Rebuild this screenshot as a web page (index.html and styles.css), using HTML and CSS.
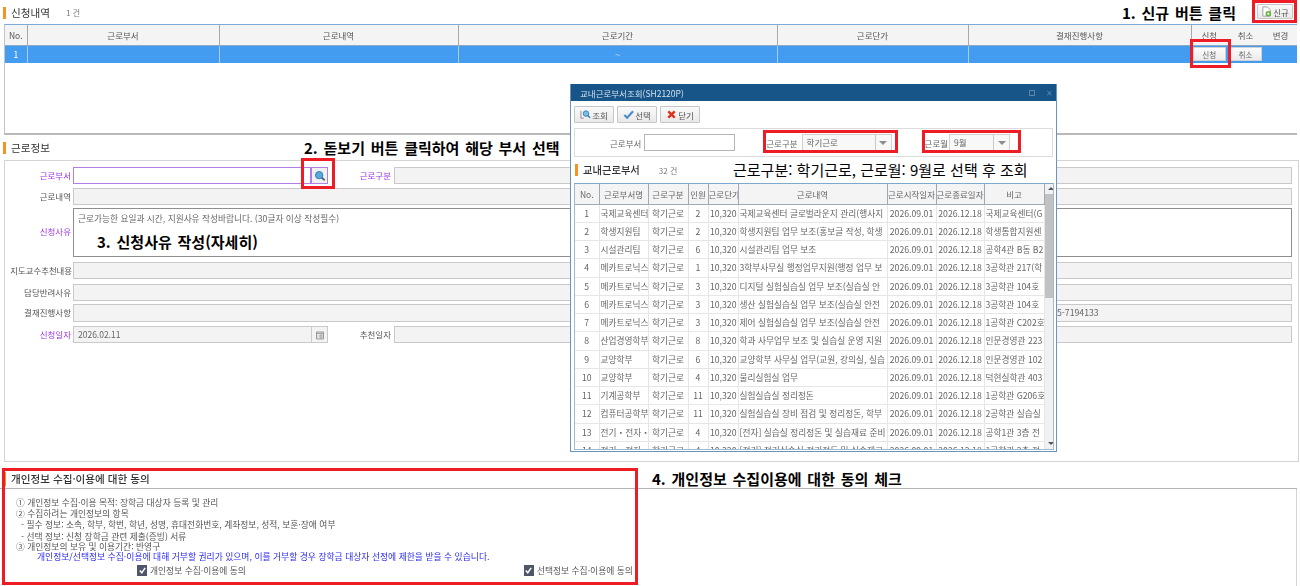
FILE: index.html
```html
<!DOCTYPE html>
<html lang="ko">
<head>
<meta charset="utf-8">
<title>신청내역</title>
<link rel="stylesheet" href="styles.css">
</head>
<body>
<main class="page">
  <section class="sec-apply">
    <header class="sec-head">
      <h2 class="sec-title">신청내역</h2><span class="count">1 건</span>
      <button class="btn btn-new" type="button">
        <svg class="ico" viewBox="0 0 12 12"><path d="M2 1h5l3 3v7H2z" fill="#fff" stroke="#999"/><circle cx="8" cy="8.5" r="3" fill="#5fae3a"/><path d="M6.5 8.5h3M8 7v3" stroke="#fff"/></svg>신규
      </button>
    </header>
    <div class="grid-top">
      <table class="tbl-top">
        <colgroup><col class="t1"><col class="t2"><col class="t3"><col class="t4"><col class="t5"><col class="t6"><col class="t7"><col class="t8"><col class="t9"></colgroup>
        <thead><tr><th>No.</th><th>근로부서</th><th>근로내역</th><th>근로기간</th><th>근로단가</th><th>결재진행사항</th><th class="plain">신청</th><th class="plain">취소</th><th class="plain">변경</th></tr></thead>
        <tbody><tr><td>1</td><td></td><td></td><td>~</td><td></td><td></td><td class="act"><button class="btn-mini" type="button">신청</button></td><td class="act"><button class="btn-mini" type="button">취소</button></td><td></td></tr></tbody>
      </table>
    </div>
  </section>

  <section class="sec-work">
    <header class="sec-head head-work"><h2 class="sec-title">근로정보</h2></header>
    <div class="form">
      <div class="row"><label class="lbl req">근로부서</label><div class="fld fld-req fld-dept"></div><button class="btn-search" type="button"><svg viewBox="0 0 14 14"><path d="M8.5 8.5l4 3.5" stroke="#5b6670" stroke-width="2.2"/><circle cx="6" cy="6" r="4.3" fill="#58a9dc" stroke="#2a78ad"/></svg></button><label class="lbl lbl2 req">근로구분</label><div class="fld fill"></div></div>
      <div class="row"><label class="lbl">근로내역</label><div class="fld fill"></div></div>
      <div class="row"><label class="lbl req lbl-mid">신청사유</label><div class="area fill">근로가능한 요일과 시간, 지원사유 작성바랍니다. (30글자 이상 작성필수)</div></div>
      <div class="row"><label class="lbl lbl-clip">지도교수추천내용</label><div class="fld fill"></div></div>
      <div class="row"><label class="lbl">담당반려사유</label><div class="fld fill"></div></div>
      <div class="row row-tall"><label class="lbl">결재진행사항</label><div class="fld fill fld-phone">5-7194133</div></div>
      <div class="row"><label class="lbl req">신청일자</label><div class="fld fld-date">2026.02.11<span class="cal"><svg viewBox="0 0 10 10"><path d="M1.5 2h7v7h-7z" fill="#e3e3e3" stroke="#999"/><path d="M1.5 3.5h7M5 5h2v2.5H5z" fill="none" stroke="#999" stroke-width=".8"/></svg></span></div><label class="lbl lbl2">추천일자</label><div class="fld fill"></div></div>
    </div>
  </section>

  <section class="sec-agree">
    <header class="sec-head head-agree"><h2 class="sec-title strong">개인정보 수집·이용에 대한 동의</h2></header>
    <div class="agree">
      <p>① 개인정보 수집·이용 목적: 장학금 대상자 등록 및 관리</p>
      <p>② 수집하려는 개인정보의 항목</p>
      <p class="sub sub-first">- 필수 정보: 소속, 학부, 학번, 학년, 성명, 휴대전화번호, 계좌정보, 성적, 보훈·장애 여부</p>
      <p class="sub tight">- 선택 정보: 신청 장학금 관련 제출(증빙) 서류</p>
      <p class="tight">③ 개인정보의 보유 및 이용기간: 반영구</p>
      <p class="tight notice">개인정보/선택정보 수집·이용에 대해 거부할 권리가 있으며, 이를 거부할 경우 장학금 대상자 선정에 제한을 받을 수 있습니다.</p>
      <div class="checks">
        <label class="chk"><span class="box"><svg viewBox="0 0 10 10"><path d="M2 5l2.2 2.5L8 2" fill="none" stroke="#fff" stroke-width="1.6"/></svg></span>개인정보 수집·이용에 동의</label>
        <label class="chk"><span class="box"><svg viewBox="0 0 10 10"><path d="M2 5l2.2 2.5L8 2" fill="none" stroke="#fff" stroke-width="1.6"/></svg></span>선택정보 수집·이용에 동의</label>
      </div>
    </div>
  </section>

  <div class="dialog">
    <div class="dlg-bar"><span>교내근로부서조회(SH2120P)</span><span class="dlg-ctl"><i class="dlg-max"></i><span class="dlg-x">✕</span></span></div>
    <div class="dlg-tools">
      <button class="btn dlg-btn" type="button"><svg class="ico" viewBox="0 0 12 12"><path d="M1 2v8h3" fill="none" stroke="#888"/><circle cx="6.5" cy="5" r="3" fill="#7fbce6" stroke="#2f7fb8"/><path d="M8.5 7l2.5 2.5" stroke="#2f7fb8" stroke-width="1.6"/></svg>조회</button>
      <button class="btn dlg-btn" type="button"><svg class="ico" viewBox="0 0 12 12"><path d="M1.5 6.5l3 3L11 2.5" fill="none" stroke="#4b8ec9" stroke-width="2.4"/></svg>선택</button>
      <button class="btn dlg-btn" type="button"><svg class="ico" viewBox="0 0 12 12"><path d="M2.5 2.5l7 7M9.5 2.5l-7 7" stroke="#e0301e" stroke-width="2.6"/></svg>닫기</button>
    </div>
    <div class="dlg-search">
      <label class="s-lbl s-dept">근로부서</label><div class="s-input"></div>
      <label class="s-lbl s-type">근로구분</label><div class="s-select s-sel-type"><span class="s-val">학기근로</span><span class="s-arrow"><i></i></span></div>
      <label class="s-lbl s-month">근로월</label><div class="s-select s-sel-month"><span class="s-val">9월</span><span class="s-arrow"><i></i></span></div>
    </div>
    <div class="dlg-head"><h2 class="sec-title dlg-title">교내근로부서</h2><span class="count dlg-count">32 건</span></div>
    <div class="dlg-grid">
      <table class="tbl-dlg">
        <colgroup><col class="d1"><col class="d2"><col class="d3"><col class="d4"><col class="d5"><col class="d6"><col class="d7"><col class="d8"><col class="d9"></colgroup>
        <thead><tr><th>No.</th><th>근로부서명</th><th>근로구분</th><th>인원</th><th>근로단가</th><th>근로내역</th><th>근로시작일자</th><th>근로종료일자</th><th>비고</th></tr></thead>
        <tbody>
          <tr><td class="c">1</td><td>국제교육센터</td><td class="c">학기근로</td><td class="c">2</td><td class="r">10,320</td><td>국제교육센터 글로벌라운지 관리(행사지</td><td class="c">2026.09.01</td><td class="c">2026.12.18</td><td>국제교육센터(G</td></tr>
          <tr><td class="c">2</td><td>학생지원팀</td><td class="c">학기근로</td><td class="c">2</td><td class="r">10,320</td><td>학생지원팀 업무 보조(홍보글 작성, 학생</td><td class="c">2026.09.01</td><td class="c">2026.12.18</td><td>학생통합지원센</td></tr>
          <tr><td class="c">3</td><td>시설관리팀</td><td class="c">학기근로</td><td class="c">6</td><td class="r">10,320</td><td>시설관리팀 업무 보조</td><td class="c">2026.09.01</td><td class="c">2026.12.18</td><td>공학4관 B동 B2</td></tr>
          <tr><td class="c">4</td><td>메카트로닉스</td><td class="c">학기근로</td><td class="c">1</td><td class="r">10,320</td><td>3학부사무실 행정업무지원(행정 업무 보</td><td class="c">2026.09.01</td><td class="c">2026.12.18</td><td>3공학관 217(학</td></tr>
          <tr><td class="c">5</td><td>메카트로닉스</td><td class="c">학기근로</td><td class="c">3</td><td class="r">10,320</td><td>디지털 실험실습실 업무 보조(실습실 안</td><td class="c">2026.09.01</td><td class="c">2026.12.18</td><td>3공학관 104호</td></tr>
          <tr><td class="c">6</td><td>메카트로닉스</td><td class="c">학기근로</td><td class="c">3</td><td class="r">10,320</td><td>생산 실험실습실 업무 보조(실습실 안전</td><td class="c">2026.09.01</td><td class="c">2026.12.18</td><td>3공학관 104호</td></tr>
          <tr><td class="c">7</td><td>메카트로닉스</td><td class="c">학기근로</td><td class="c">3</td><td class="r">10,320</td><td>제어 실험실습실 업무 보조(실습실 안전</td><td class="c">2026.09.01</td><td class="c">2026.12.18</td><td>1공학관 C202호</td></tr>
          <tr><td class="c">8</td><td>산업경영학부</td><td class="c">학기근로</td><td class="c">8</td><td class="r">10,320</td><td>학과 사무업무 보조 및 실습실 운영 지원</td><td class="c">2026.09.01</td><td class="c">2026.12.18</td><td>인문경영관 223</td></tr>
          <tr><td class="c">9</td><td>교양학부</td><td class="c">학기근로</td><td class="c">6</td><td class="r">10,320</td><td>교양학부 사무실 업무(교원, 강의실, 실습</td><td class="c">2026.09.01</td><td class="c">2026.12.18</td><td>인문경영관 102</td></tr>
          <tr><td class="c">10</td><td>교양학부</td><td class="c">학기근로</td><td class="c">4</td><td class="r">10,320</td><td>물리실험실 업무</td><td class="c">2026.09.01</td><td class="c">2026.12.18</td><td>덕현실학관 403</td></tr>
          <tr><td class="c">11</td><td>기계공학부</td><td class="c">학기근로</td><td class="c">11</td><td class="r">10,320</td><td>실험실습실 정리정돈</td><td class="c">2026.09.01</td><td class="c">2026.12.18</td><td>1공학관 G206호</td></tr>
          <tr><td class="c">12</td><td>컴퓨터공학부</td><td class="c">학기근로</td><td class="c">11</td><td class="r">10,320</td><td>실험실습실 장비 점검 및 정리정돈, 학부</td><td class="c">2026.09.01</td><td class="c">2026.12.18</td><td>2공학관 실습실</td></tr>
          <tr><td class="c">13</td><td>전기・전자・</td><td class="c">학기근로</td><td class="c">4</td><td class="r">10,320</td><td>[전자] 실습실 정리정돈 및 실습재료 준비</td><td class="c">2026.09.01</td><td class="c">2026.12.18</td><td>공학1관 3층 전</td></tr>
          <tr><td class="c">14</td><td>전기・전자・</td><td class="c">학기근로</td><td class="c">4</td><td class="r">10,320</td><td>[전기] 전기실습실 정리정돈 및 실습재료</td><td class="c">2026.09.01</td><td class="c">2026.12.18</td><td>1공학관 2층 전</td></tr>
        </tbody>
      </table>
      <div class="scroll"><span class="sc-up"></span><span class="sc-thumb"></span><span class="sc-down"></span></div>
    </div>
  </div>

  <p class="note note1">1. 신규 버튼 클릭</p>
  <p class="note note2">2. 돋보기 버튼 클릭하여 해당 부서 선택</p>
  <p class="note note3">3. 신청사유 작성(자세히)</p>
  <p class="note note4">4. 개인정보 수집이용에 대한 동의 체크</p>
  <p class="note note5">근로구분: 학기근로, 근로월: 9월로 선택 후 조회</p>

  <div class="mark m-new"></div>
  <div class="mark m-apply"></div>
  <div class="mark m-search"></div>
  <div class="mark m-type"></div>
  <div class="mark m-month"></div>
  <div class="mark m-agree"></div>
</main>
</body>
</html>
```

FILE: styles.css
```css
* { box-sizing: border-box; }
html, body { margin: 0; padding: 0; background: #fff; }
body { font-family: "Noto Sans CJK KR", "Noto Sans", sans-serif; font-size: 8.5px; color: #555; overflow: hidden; }
p, h2 { margin: 0; }
button { font-family: inherit; font-size: inherit; color: inherit; padding: 0; }
.page { position: relative; width: 1300px; height: 586px; overflow: hidden; }
.sec-apply, .sec-work, .sec-agree { filter: blur(.3px); }

/* section headings */
.sec-head { display: flex; align-items: center; height: 24px; padding: 1px 7px 0 3px; }
.sec-title { font-size: 10.6px; font-weight: 400; color: #333; line-height: 12px; border-left: 3px solid #f7931e; padding-left: 5px; }
.sec-title.strong { font-weight: 500; }
.count { margin-left: 16px; font-size: 8px; color: #777; }
.btn { display: flex; align-items: center; justify-content: center; gap: 1px; background: linear-gradient(#fafafa, #e9e9e9); border: 1px solid #c6c6c6; border-radius: 1px; color: #555; }
.btn-new { margin-left: auto; width: 36px; height: 15px; margin-top: -2px; }
.ico { width: 11px; height: 11px; flex: none; }

/* top grid */
.sec-apply { height: 135px; }
.grid-top { height: 111px; margin-left: 4px; width: 1293px; border-top: 1px solid #7cabd8; border-bottom: 2px solid #b9b9b9; border-left: 1px solid #c4c4c4; }
.tbl-top { table-layout: fixed; border-collapse: collapse; width: 1292px; }
.t1 { width: 22px; } .t2 { width: 192px; } .t3 { width: 239px; } .t4 { width: 319px; } .t5 { width: 191px; } .t6 { width: 223px; } .t7 { width: 36px; } .t8 { width: 37px; } .t9 { width: 33px; }
.tbl-top th { height: 20px; font-weight: 400; background: #f4f4f4; border-right: 1px solid #a9a9a9; border-bottom: 1px solid #8ea9c4; color: #555; }
.tbl-top th.plain { border-right: 0; }
.tbl-top td { height: 18px; background: #449cf0; color: #fff; text-align: center; border-right: 1px solid #a7cdf3; padding: 0; }
.tbl-top td.act, .tbl-top td:last-child { border-right: 0; }
.btn-mini { display: block; margin: 0 auto; width: 33px; height: 14px; background: linear-gradient(#fbfbfb, #ececec); border: 1px solid #d2d2d2; line-height: 11px; font-size: 7.6px; color: #666; }

/* form */
.sec-work { height: 327px; }
.head-work { height: 25px; }
.form { margin-left: 4px; width: 1295px; height: 302px; border: 1px solid #d4d4d4; padding: 6px 6px 0 0; display: grid; grid-template-rows: 21px 20px 54px 22px 20px 22px 17px; }
.row { display: flex; align-items: flex-start; height: 17px; }
.row:nth-child(3) { height: 49px; }
.row-tall { height: 18px; }
.lbl { width: 67px; flex: none; height: 100%; text-align: right; line-height: 16px; color: #555; white-space: nowrap; padding-right: 1px; }
.lbl2 { width: 64px; margin-right: 1px; }
.req { color: #9a35e8; }
.lbl-mid { line-height: 46px; }
.lbl-clip { direction: rtl; overflow: hidden; padding-right: 0; font-size: 8.4px; text-overflow: clip; }
.fld { height: 100%; margin-left: 1px; background: #f3f3f3; border: 1px solid #c9c9c9; line-height: 15px; padding-left: 4px; color: #666; }
.fill { flex: 1; }
.fld-req { background: #fff; border-color: #b27ee6; }
.fld-dept { width: 238px; flex: none; }
.btn-search { width: 17px; height: 17px; flex: none; background: #f1f1f1; border: 1px solid #b27ee6; display: flex; align-items: center; justify-content: center; }
.btn-search svg { width: 12px; height: 12px; }
.area { height: 100%; margin-left: 1px; background: #fff; border: 1px solid #8e8e8e; padding: 3px 4px; line-height: 13px; color: #666; font-size: 8.7px; }
.fld-date { width: 255px; flex: none; display: flex; justify-content: space-between; padding-right: 0; }
.cal { width: 16px; border-left: 1px solid #ccc; display: flex; align-items: center; justify-content: center; }
.cal svg { width: 10px; height: 10px; }
.fld-phone { padding-left: 983px; font-size: 8.7px; white-space: nowrap; overflow: hidden; }

/* consent */
.sec-agree { height: 124px; }
.head-agree { height: 27px; padding-top: 7px; border-bottom: 1px solid #b5b5b5; margin-left: 0; width: 1297px; }
.head-agree .sec-title { line-height: 14px; }
.agree { margin-left: 4px; width: 1293px; height: 97px; border-left: 1px solid #d4d4d4; border-right: 1px solid #d4d4d4; padding: 8px 0 0 11px; line-height: 11px; color: #555; font-size: 8.75px; }
.agree p { height: 11px; white-space: nowrap; }
.sub { padding-left: 5px; }
.agree .sub-first { height: 13px; }
.agree .tight { height: 10px; line-height: 10px; }
.agree .notice { padding-left: 21px; color: #2a2af0; font-size: 8.8px; }
.checks { display: flex; margin-top: 3px; padding-left: 121px; }
.chk { display: flex; align-items: center; gap: 3px; white-space: nowrap; }
.chk:last-child { margin-left: 278px; }
.box { width: 10px; height: 11px; background: #4f5668; display: flex; align-items: center; justify-content: center; flex: none; }
.box svg { width: 9px; height: 9px; }

/* dialog window */
.dialog { position: absolute; left: 570px; top: 84px; width: 487px; height: 368px; background: #fff; border: 1px solid #6d94b8; border-top: 0; overflow: hidden; filter: blur(.4px); }
.dlg-bar { height: 17px; background: #175488; color: #d4e2ee; display: flex; align-items: center; justify-content: space-between; padding: 0 3px 0 9px; font-size: 8.5px; }
.dlg-ctl { display: flex; align-items: center; gap: 11px; color: #5c86aa; }
.dlg-max { width: 6px; height: 6px; border: 1px solid #5c86aa; }
.dlg-x { font-size: 8px; }
.dlg-tools { display: flex; gap: 3px; padding: 5px 0 0 3px; height: 27px; }
.dlg-btn { width: 40px; height: 17px; }
.dlg-search { position: relative; margin: 0 3px; height: 29px; border: 1px solid #dcdcdc; display: flex; align-items: center; color: #666; }
.s-lbl { white-space: nowrap; }
.s-dept { margin-left: 35px; }
.s-input { width: 91px; height: 17px; border: 1px solid #b5b5b5; margin-left: 3px; }
.s-type { margin-left: 31px; }
.s-select { height: 17px; border: 1px solid #d2d2d2; display: flex; align-items: stretch; margin-left: 4px; background: #f8f8f8; }
.s-sel-type { width: 90px; }
.s-sel-month { width: 61px; margin-left: 1px; }
.s-val { flex: 1; padding-left: 4px; line-height: 15px; }
.s-arrow { width: 16px; border-left: 1px solid #c9c9c9; display: flex; align-items: center; justify-content: center; }
.s-arrow i { width: 0; height: 0; border: 4px solid transparent; border-top: 4px solid #8c8c8c; border-bottom: 0; }
.s-month { margin-left: 33px; }
.dlg-head { display: flex; align-items: center; height: 26px; padding: 0 0 0 4px; }
.dlg-title { font-weight: 500; font-size: 10.3px; }
.dlg-count { margin-left: 19px; }
.dlg-grid { display: flex; margin-left: 3px; width: 480px; height: 267px; border: 1px solid #9db9d3; border-top: 1px solid #7ea9cf; overflow: hidden; }
.tbl-dlg { table-layout: fixed; border-collapse: collapse; width: 469px; height: 0; flex: none; }
.d1 { width: 24px; } .d2 { width: 49px; } .d3 { width: 40px; } .d4 { width: 20px; } .d5 { width: 30px; } .d6 { width: 149px; } .d7 { width: 49px; } .d8 { width: 48px; } .d9 { width: 60px; }
.tbl-dlg th { height: 20px; padding: 0; font-weight: 400; background: #f4f4f4; border-right: 1px solid #9fa9b3; border-bottom: 1px solid #9fa9b3; color: #666; overflow: hidden; white-space: nowrap; }
.tbl-dlg td { height: 18.25px; padding: 0 1px 0 1px; border-right: 1px solid #e6e6e6; border-bottom: 1px solid #e6e6e6; white-space: nowrap; overflow: hidden; color: #666; font-size: 8.7px; }
.tbl-dlg td.c { text-align: center; }
.tbl-dlg td.r { text-align: right; }
.scroll { flex: 1; background: #f1f1f1; display: flex; flex-direction: column; align-items: center; }
.sc-up, .sc-down { height: 10px; width: 100%; position: relative; flex: none; }
.sc-up::after, .sc-down::after { content: ""; position: absolute; left: 3px; top: 3px; border: 3px solid transparent; }
.sc-up::after { border-bottom-color: #555; border-top: 0; }
.sc-down::after { border-top-color: #555; border-bottom: 0; }
.sc-thumb { width: 100%; height: 104px; background: #c2c2c2; }
.sc-down { margin-top: auto; }

/* annotations */
.note { position: absolute; white-space: nowrap; color: #000; font-size: 15px; font-weight: 700; line-height: 18px; word-spacing: 1.6px; }
.note1 { left: 1122px; top: 4px; }
.note2 { left: 304px; top: 139px; }
.note3 { left: 97px; top: 233px; }
.note4 { left: 652px; top: 470px; }
.note5 { left: 733px; top: 161px; font-weight: 400; font-size: 15px; word-spacing: 0; }
.mark { position: absolute; border: 3px solid #ee1c25; }
.m-new { left: 1252px; top: 0; width: 45px; height: 23px; }
.m-apply { left: 1190px; top: 39px; width: 41px; height: 29px; }
.m-search { left: 301px; top: 158px; width: 34px; height: 31px; }
.m-type { left: 763px; top: 130px; width: 135px; height: 23px; }
.m-month { left: 922px; top: 130px; width: 99px; height: 23px; }
.m-agree { left: 2px; top: 468px; width: 636px; height: 117px; }
```
